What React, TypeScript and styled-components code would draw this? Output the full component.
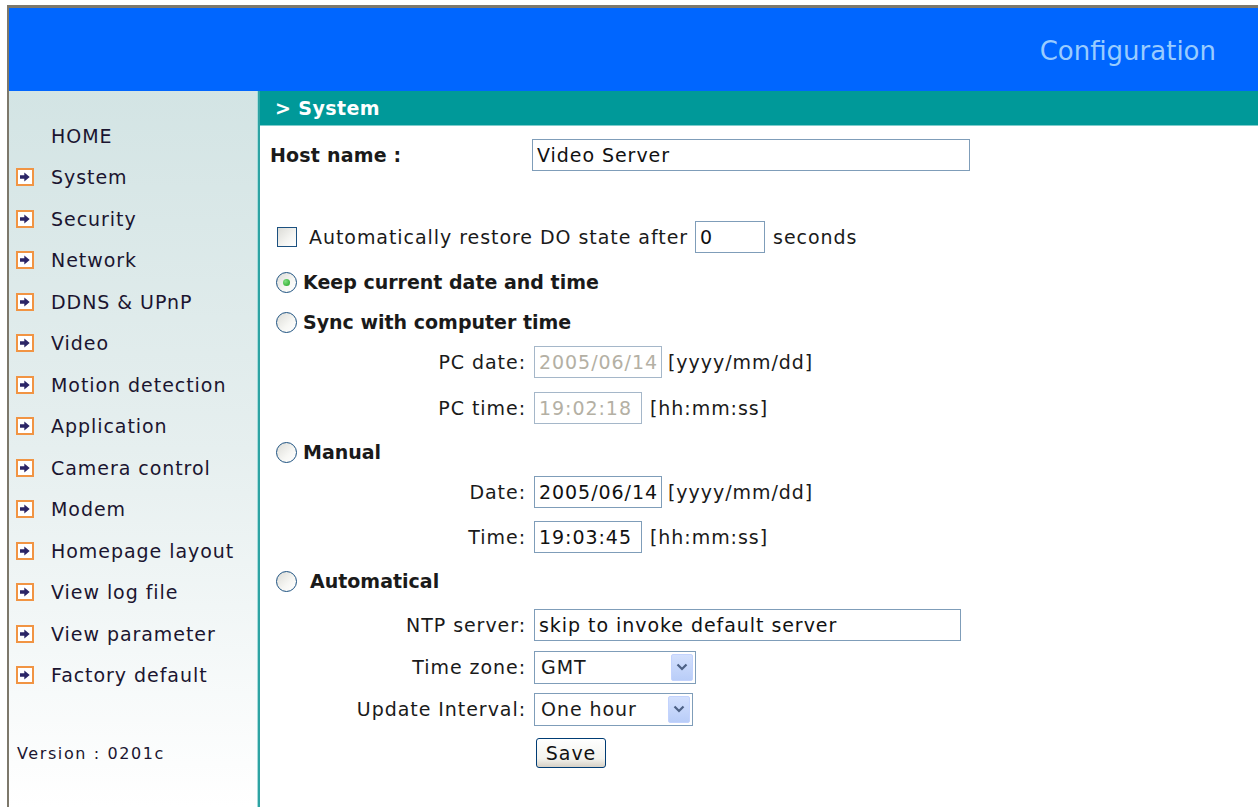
import React, { useState } from 'react';
import styled, { createGlobalStyle } from 'styled-components';

const GlobalStyle = createGlobalStyle`
  html, body {
    margin: 0;
    padding: 0;
    background: #ffffff;
  }
  body {
    font-family: 'DejaVu Sans', Verdana, sans-serif;
    color: #1a1a1a;
    letter-spacing: 0.95px;
  }
`;

const Frame = styled.div`
  margin: 5px 0 0 7px;
  border-top: 3px solid #7d786b;
  border-left: 2px solid #7d786b;
  height: 802px;
  display: flex;
  flex-direction: column;
  box-sizing: border-box;
  overflow: hidden;
`;

const Header = styled.div`
  height: 83px;
  background: #0066ff;
  display: flex;
  align-items: center;
  justify-content: flex-end;
  padding-right: 42px;
  flex-shrink: 0;
`;

const HeaderTitle = styled.div`
  color: #99ccff;
  font-size: 26px;
  letter-spacing: 0;
  margin-top: 2px;
`;

const Body = styled.div`
  flex: 1;
  display: flex;
`;

const Sidebar = styled.nav`
  width: 249px;
  flex-shrink: 0;
  background: linear-gradient(180deg, #d3e4e4 0%, #e6efef 50%, #ffffff 100%);
  border-right: 1px solid #a8dcdc;
  padding-top: 24px;
  box-sizing: border-box;
`;

const MenuItem = styled.div`
  height: 41.5px;
  display: flex;
  align-items: center;
  font-size: 19px;
  color: #1b1530;
`;

const MenuIcon = styled.span<{ $hidden?: boolean }>`
  width: 14px;
  height: 14px;
  margin: 0 17px 0 7px;
  border: 2px solid #f19443;
  background: #ffffff;
  display: flex;
  align-items: center;
  justify-content: center;
  visibility: ${p => (p.$hidden ? 'hidden' : 'visible')};
`;

const Version = styled.div`
  margin-top: 48px;
  padding-left: 8px;
  font-size: 16px;
  letter-spacing: 1.6px;
  color: #1b1530;
`;

const Main = styled.main`
  flex: 1;
  border-left: 2px solid #2ea3a3;
  display: flex;
  flex-direction: column;
`;

const SectionBar = styled.div`
  height: 34px;
  background: #009999;
  border-bottom: 1px solid #7fcccc;
  color: #ffffff;
  font-weight: bold;
  font-size: 19px;
  letter-spacing: 0.4px;
  display: flex;
  align-items: center;
  padding-left: 15px;
`;

const Form = styled.div`
  padding: 13px 0 0 10px;
  display: flex;
  flex-direction: column;
  font-size: 19px;
`;

const Row = styled.div<{ $top?: number; $h?: number }>`
  display: flex;
  align-items: center;
  height: ${p => p.$h ?? 32}px;
  margin-top: ${p => p.$top ?? 0}px;
  white-space: nowrap;
`;

const HostLabel = styled.div`
  width: 262px;
  font-weight: bold;
  letter-spacing: 0.2px;
`;

const FieldLabel = styled.div`
  width: 256px;
  margin-right: 8px;
  text-align: right;
`;

const TextBox = styled.input<{ $w: number }>`
  width: ${p => p.$w}px;
  height: 32px;
  box-sizing: border-box;
  border: 1px solid #7f9db9;
  padding: 0 3px 0 4px;
  font-family: inherit;
  font-size: 19px;
  letter-spacing: 0.95px;
  color: #111111;
  background: #ffffff;
  outline: none;
  &:disabled {
    color: #b4b0a4;
    border-color: #a5b7c9;
    background: #ffffff;
  }
`;

const Hint = styled.span<{ $gap?: number }>`
  margin-left: ${p => p.$gap ?? 6}px;
`;

const CheckBox = styled.span`
  width: 18px;
  height: 18px;
  border: 1px solid #1c5180;
  background: linear-gradient(135deg, #dcdcd7 0%, #f5f5f2 60%, #ffffff 100%);
  margin: 0 12px 0 7px;
  flex-shrink: 0;
`;

const RadioDot = styled.span<{ $checked?: boolean; $gap?: number }>`
  width: 19px;
  height: 19px;
  border-radius: 50%;
  border: 1px solid #1c5180;
  background: linear-gradient(135deg, #dcdcd7 0%, #f7f7f4 60%, #ffffff 100%);
  margin: 0 ${p => p.$gap ?? 6}px 0 6px;
  display: flex;
  align-items: center;
  justify-content: center;
  flex-shrink: 0;
  &::after {
    content: '';
    width: 7px;
    height: 7px;
    border-radius: 50%;
    background: ${p => (p.$checked ? 'radial-gradient(circle at 35% 35%, #7fe07f, #21a121)' : 'transparent')};
  }
`;

const BoldText = styled.span`
  font-weight: bold;
  letter-spacing: 0;
`;

const SelectBox = styled.div<{ $w: number }>`
  width: ${p => p.$w}px;
  height: 33px;
  box-sizing: border-box;
  border: 1px solid #7f9db9;
  background: #ffffff;
  display: flex;
  align-items: center;
  justify-content: space-between;
  padding: 2px 2px 2px 6px;
`;

const DropButton = styled.span`
  width: 22px;
  height: 100%;
  border-radius: 2px;
  background: linear-gradient(180deg, #d3e0fd 0%, #b9cdf8 100%);
  border: 1px solid #c3d3fd;
  box-sizing: border-box;
  display: flex;
  align-items: center;
  justify-content: center;
`;

const SaveButton = styled.button`
  margin-left: 266px;
  height: 30px;
  width: 70px;
  padding: 0;
  font-family: inherit;
  font-size: 19px;
  letter-spacing: 0.95px;
  color: #111111;
  border: 1px solid #003c74;
  border-radius: 3px;
  background: linear-gradient(180deg, #ffffff 0%, #f3f3ee 70%, #d6d0c5 100%);
`;

const menu = [
  'System',
  'Security',
  'Network',
  'DDNS & UPnP',
  'Video',
  'Motion detection',
  'Application',
  'Camera control',
  'Modem',
  'Homepage layout',
  'View log file',
  'View parameter',
  'Factory default'
];

const Arrow = () => (
  <svg width="10" height="10" viewBox="0 0 10 10">
    <path d="M0 3.3h4.3V0.6l5.4 4.4-5.4 4.4V6.7H0z" fill="#2b2566" />
  </svg>
);

const Chevron = () => (
  <svg width="12" height="8" viewBox="0 0 12 8">
    <path d="M1.5 1.5l4.5 4.5 4.5-4.5" fill="none" stroke="#4d6185" strokeWidth="2.2" />
  </svg>
);

const App: React.FC = () => {
  const [mode, setMode] = useState('keep');

  return (
    <Frame>
      <GlobalStyle />
      <Header>
        <HeaderTitle>Configuration</HeaderTitle>
      </Header>
      <Body>
        <Sidebar>
          <MenuItem>
            <MenuIcon $hidden />
            HOME
          </MenuItem>
          {menu.map(item => (
            <MenuItem key={item}>
              <MenuIcon>
                <Arrow />
              </MenuIcon>
              {item}
            </MenuItem>
          ))}
          <Version>Version : 0201c</Version>
        </Sidebar>
        <Main>
          <SectionBar>&gt; System</SectionBar>
          <Form>
            <Row>
              <HostLabel>Host name :</HostLabel>
              <TextBox $w={438} defaultValue="Video Server" />
            </Row>
            <Row $top={50}>
              <CheckBox />
              Automatically restore DO state after&nbsp;
              <TextBox $w={70} defaultValue="0" />
              <Hint $gap={8}>seconds</Hint>
            </Row>
            <Row $top={17} $h={24} onClick={() => setMode('keep')}>
              <RadioDot $checked={mode === 'keep'} />
              <BoldText>Keep current date and time</BoldText>
            </Row>
            <Row $top={16} $h={24} onClick={() => setMode('sync')}>
              <RadioDot $checked={mode === 'sync'} />
              <BoldText>Sync with computer time</BoldText>
            </Row>
            <Row $top={12}>
              <FieldLabel>PC date:</FieldLabel>
              <TextBox $w={128} defaultValue="2005/06/14" disabled />
              <Hint>[yyyy/mm/dd]</Hint>
            </Row>
            <Row $top={14}>
              <FieldLabel>PC time:</FieldLabel>
              <TextBox $w={108} defaultValue="19:02:18" disabled />
              <Hint $gap={8}>[hh:mm:ss]</Hint>
            </Row>
            <Row $top={16} $h={24} onClick={() => setMode('manual')}>
              <RadioDot $checked={mode === 'manual'} />
              <BoldText>Manual</BoldText>
            </Row>
            <Row $top={12}>
              <FieldLabel>Date:</FieldLabel>
              <TextBox $w={128} defaultValue="2005/06/14" />
              <Hint>[yyyy/mm/dd]</Hint>
            </Row>
            <Row $top={13}>
              <FieldLabel>Time:</FieldLabel>
              <TextBox $w={108} defaultValue="19:03:45" />
              <Hint $gap={8}>[hh:mm:ss]</Hint>
            </Row>
            <Row $top={16} $h={24} onClick={() => setMode('auto')}>
              <RadioDot $checked={mode === 'auto'} $gap={13} />
              <BoldText>Automatical</BoldText>
            </Row>
            <Row $top={16}>
              <FieldLabel>NTP server:</FieldLabel>
              <TextBox $w={427} defaultValue="skip to invoke default server" />
            </Row>
            <Row $top={10}>
              <FieldLabel>Time zone:</FieldLabel>
              <SelectBox $w={162}>
                GMT
                <DropButton>
                  <Chevron />
                </DropButton>
              </SelectBox>
            </Row>
            <Row $top={10}>
              <FieldLabel>Update Interval:</FieldLabel>
              <SelectBox $w={159}>
                One hour
                <DropButton>
                  <Chevron />
                </DropButton>
              </SelectBox>
            </Row>
            <Row $top={13} $h={30}>
              <SaveButton>Save</SaveButton>
            </Row>
          </Form>
        </Main>
      </Body>
    </Frame>
  );
};

export default App;
